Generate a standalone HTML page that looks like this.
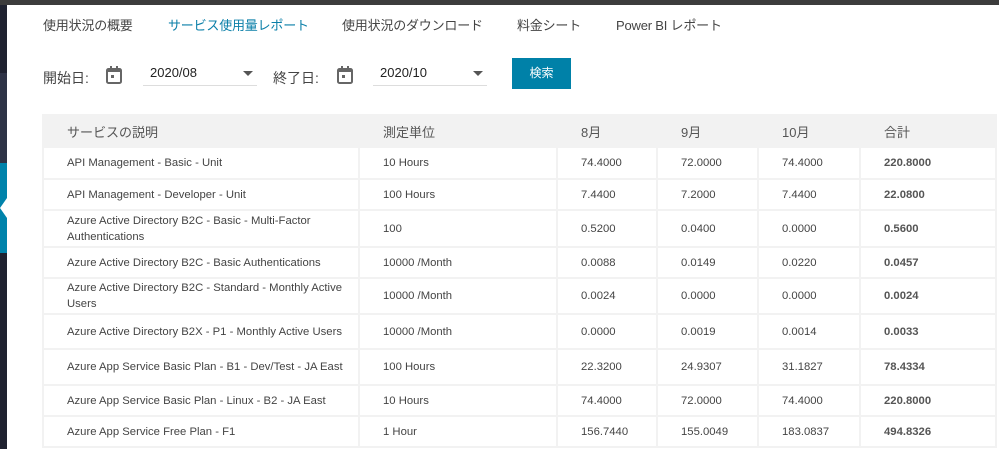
<!DOCTYPE html>
<html><head><meta charset="utf-8"><style>
body{margin:0;width:999px;height:449px;overflow:hidden;background:#fff;font-family:"Segoe UI","Liberation Sans","Noto Sans CJK JP",sans-serif;color:#444;position:relative}
.top{position:absolute;left:0;top:0;width:999px;height:5px;background:#3c3c3c}
.sb{position:absolute;left:0;width:7px}
.nav{position:absolute;top:15px;font-size:13px;color:#444;letter-spacing:-0.2px}
.lbl{position:absolute;top:68px;font-size:14px;color:#444}
.sel{position:absolute;top:62px;height:24px;border-bottom:1px solid #ddd;font-size:13px;color:#222;padding-left:7px;box-sizing:border-box;line-height:22px}
.sel:after{content:"";position:absolute;right:4px;top:9px;border-left:5px solid transparent;border-right:5px solid transparent;border-top:5px solid #555}
.btn{position:absolute;left:512px;top:58px;width:59px;height:31px;background:#0081a8;color:#fff;font-size:12px;text-align:center;line-height:30px}
table{position:absolute;left:42px;top:114px;border-collapse:separate;border-spacing:2px;background:#f2f2f2;font-size:11.3px;width:955px}
td{background:#fff;padding:0 0 0 23px;line-height:16px}
th{background:#f2f2f2;font-weight:normal;text-align:left;padding:0 0 0 23px;font-size:13px;color:#555}
td.b{font-weight:bold;color:#555}
</style></head><body>
<div class="top"></div>
<div class="sb" style="top:5px;height:68px;background:#1f2230"></div>
<div class="sb" style="top:73px;height:90px;background:#2e3346"></div>
<div class="sb" style="top:163px;height:90px;background:#0083ab"></div>
<div class="sb" style="top:253px;height:196px;background:#1f2230"></div>
<svg style="position:absolute;left:0;top:198px" width="7" height="20"><path d="M7 0 L0 10 L7 20" fill="#fff"/></svg>
<div class="nav" style="left:43px">使用状況の概要</div>
<div class="nav" style="left:168px;color:#0a7fa8">サービス使用量レポート</div>
<div class="nav" style="left:342px">使用状況のダウンロード</div>
<div class="nav" style="left:517px">料金シート</div>
<div class="nav" style="left:616px">Power BI レポート</div>
<div class="lbl" style="left:43px">開始日:</div>
<svg style="position:absolute;left:106px;top:66px" width="16" height="18"><rect x="1" y="3" width="14" height="14" rx="1.5" fill="none" stroke="#666" stroke-width="2"/><rect x="1" y="3" width="14" height="3" fill="#666"/><rect x="4" y="0" width="2" height="4" fill="#666"/><rect x="10" y="0" width="2" height="4" fill="#666"/><rect x="5" y="9" width="3" height="3" fill="#666"/></svg>
<div class="sel" style="left:143px;width:114px">2020/08</div>
<div class="lbl" style="left:273px">終了日:</div>
<svg style="position:absolute;left:337px;top:66px" width="16" height="18"><rect x="1" y="3" width="14" height="14" rx="1.5" fill="none" stroke="#666" stroke-width="2"/><rect x="1" y="3" width="14" height="3" fill="#666"/><rect x="4" y="0" width="2" height="4" fill="#666"/><rect x="10" y="0" width="2" height="4" fill="#666"/><rect x="5" y="9" width="3" height="3" fill="#666"/></svg>
<div class="sel" style="left:373px;width:114px">2020/10</div>
<div class="btn">検索</div>
<table>
<colgroup><col style="width:314px"><col style="width:196px"><col style="width:98px"><col style="width:99px"><col style="width:100px"><col></colgroup>
<tr style="height:30px"><th>サービスの説明</th><th>測定単位</th><th>8月</th><th>9月</th><th>10月</th><th>合計</th></tr>
<tr style="height:30px"><td>API Management - Basic - Unit</td><td>10 Hours</td><td>74.4000</td><td>72.0000</td><td>74.4000</td><td class="b">220.8000</td></tr>
<tr style="height:29px"><td>API Management - Developer - Unit</td><td>100 Hours</td><td>7.4400</td><td>7.2000</td><td>7.4400</td><td class="b">22.0800</td></tr>
<tr style="height:35px"><td>Azure Active Directory B2C - Basic - Multi-Factor Authentications</td><td>100</td><td>0.5200</td><td>0.0400</td><td>0.0000</td><td class="b">0.5600</td></tr>
<tr style="height:29px"><td>Azure Active Directory B2C - Basic Authentications</td><td>10000 /Month</td><td>0.0088</td><td>0.0149</td><td>0.0220</td><td class="b">0.0457</td></tr>
<tr style="height:34px"><td>Azure Active Directory B2C - Standard - Monthly Active Users</td><td>10000 /Month</td><td>0.0024</td><td>0.0000</td><td>0.0000</td><td class="b">0.0024</td></tr>
<tr style="height:33px"><td>Azure Active Directory B2X - P1 - Monthly Active Users</td><td>10000 /Month</td><td>0.0000</td><td>0.0019</td><td>0.0014</td><td class="b">0.0033</td></tr>
<tr style="height:34px"><td>Azure App Service Basic Plan - B1 - Dev/Test - JA East</td><td>100 Hours</td><td>22.3200</td><td>24.9307</td><td>31.1827</td><td class="b">78.4334</td></tr>
<tr style="height:29px"><td>Azure App Service Basic Plan - Linux - B2 - JA East</td><td>10 Hours</td><td>74.4000</td><td>72.0000</td><td>74.4000</td><td class="b">220.8000</td></tr>
<tr style="height:29px"><td>Azure App Service Free Plan - F1</td><td>1 Hour</td><td>156.7440</td><td>155.0049</td><td>183.0837</td><td class="b">494.8326</td></tr>
</table>
</body></html>
